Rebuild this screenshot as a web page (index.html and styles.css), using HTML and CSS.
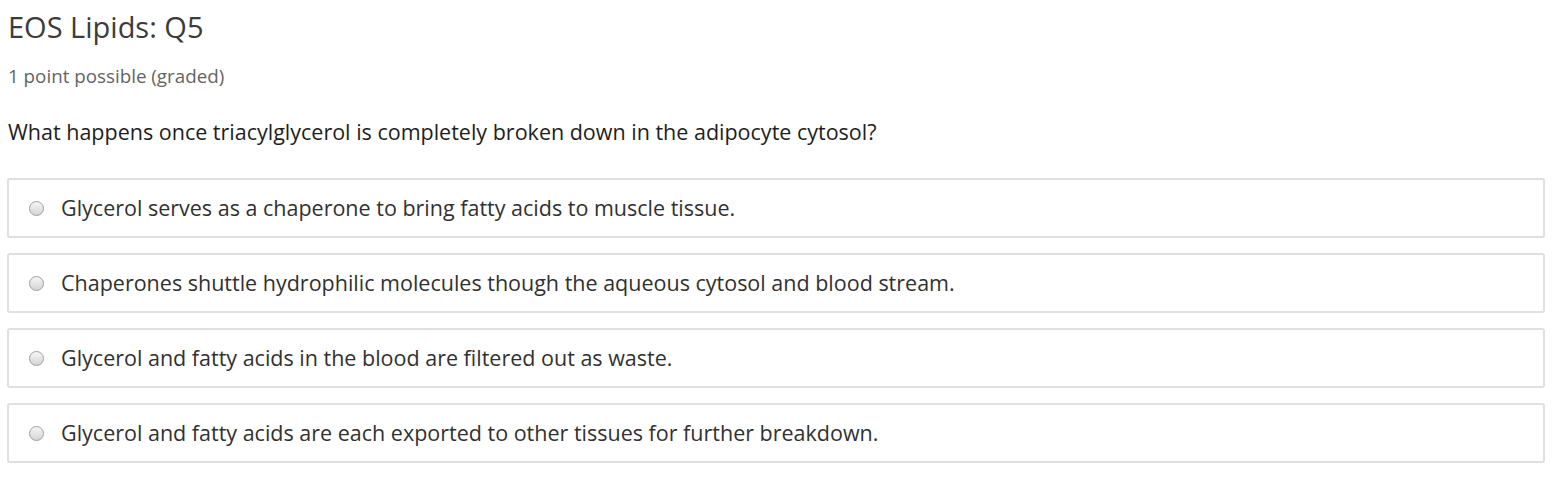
FILE: index.html
```html
<!DOCTYPE html>
<html>
<head>
<meta charset="utf-8">
<link rel="stylesheet" href="styles.css">
</head>
<body>
<div class="problem">
  <h3 class="title">EOS Lipids: Q5</h3>
  <div class="meta">1 point possible (graded)</div>
  <p class="question">What happens once triacylglycerol is completely broken down in the adipocyte cytosol?</p>
  <div class="choices">
    <label class="choice"><span class="radio"></span><span class="label">Glycerol serves as a chaperone to bring fatty acids to muscle tissue.</span></label>
    <label class="choice"><span class="radio"></span><span class="label">Chaperones shuttle hydrophilic molecules though the aqueous cytosol and blood stream.</span></label>
    <label class="choice"><span class="radio"></span><span class="label">Glycerol and fatty acids in the blood are filtered out as waste.</span></label>
    <label class="choice"><span class="radio"></span><span class="label">Glycerol and fatty acids are each exported to other tissues for further breakdown.</span></label>
  </div>
</div>
</body>
</html>
```
FILE: styles.css
```css
html, body { margin: 0; padding: 0; background: #fff; }
body { font-family: "Open Sans", sans-serif; color: #313131; }
.problem { padding: 0 12px 0 7px; }
.title { margin: 0; padding-top: 9px; font-size: 29px; font-weight: 400; line-height: 36px; color: #3c3c3c; padding-left: 1px; }
.meta { margin-top: 19px; font-size: 18.8px; line-height: 24px; color: #646464; padding-left: 1px; }
.question { margin: 30px 0 0; font-size: 21.5px; line-height: 28px; color: #1e1e1e; padding-left: 1px; }
.choices { margin-top: 32px; display: flex; flex-direction: column; gap: 15px; }
.choice { display: flex; align-items: center; height: 56px; border: 2px solid #e0e0e0; border-radius: 3px; padding-left: 21px; }
.radio { width: 15px; height: 15px; margin-left: -1px; border-radius: 50%; border: 1px solid #9e9e9e; box-sizing: border-box; background: linear-gradient(#f6f6f6, #d4d4d4); flex: none; }
.label { margin-left: 17px; font-size: 21.5px; line-height: 28px; color: #313131; }
```
